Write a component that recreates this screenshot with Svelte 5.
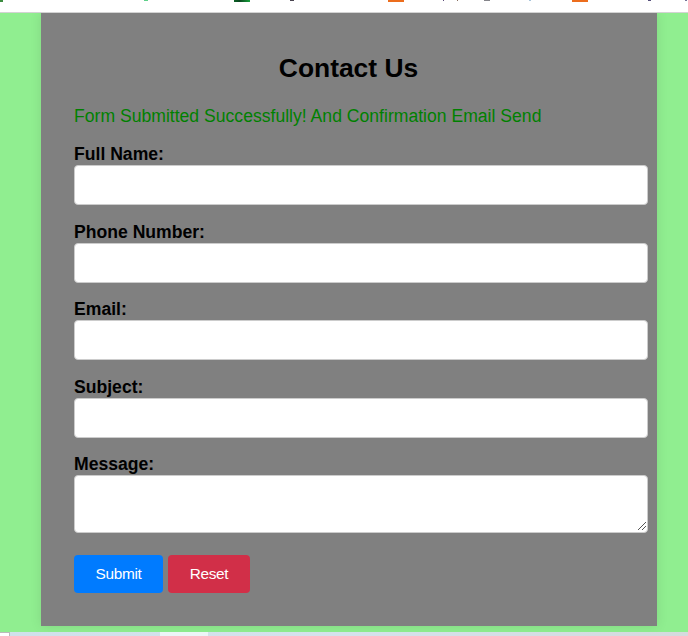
<script>
  const fields = ['Full Name', 'Phone Number', 'Email', 'Subject'];
  const marks = [
    { x: 0, w: 3, h: 2, c: '#3c8c40' },
    { x: 144, w: 4, h: 1, c: '#5fd08a' },
    { x: 234, w: 16, h: 2, c: 'linear-gradient(90deg, #0b6325, #0a4520 35%, #17a43c)' },
    { x: 290, w: 4, h: 1, c: '#4a4550' },
    { x: 388, w: 16, h: 2, c: '#ec6d1d' },
    { x: 443, w: 1, h: 1, c: '#5b4b79' },
    { x: 457, w: 1, h: 1, c: '#8a7060' },
    { x: 484, w: 6, h: 1, c: '#85858b' },
    { x: 529, w: 2, h: 1, c: '#a8c5dc' },
    { x: 572, w: 16, h: 2, c: '#ec6d1d' },
    { x: 648, w: 3, h: 1, c: '#56507c' },
    { x: 685, w: 2, h: 1, c: '#77749a' }
  ];
</script>

<div class="screen">
  <header>
    {#each marks as m}
      <i style="left:{m.x}px;width:{m.w}px;height:{m.h}px;background:{m.c}"></i>
    {/each}
  </header>
  <main>
    <section class="card">
      <h2>Contact Us</h2>
      <p>Form Submitted Successfully! And Confirmation Email Send</p>
      <form>
        {#each fields as field, i}
          <div class="field">
            <label for="field-{i}">{field}:</label>
            <input id="field-{i}" type="text" />
          </div>
        {/each}
        <div class="field">
          <label for="message">Message:</label>
          <div class="area">
            <textarea id="message"></textarea>
            <svg width="9" height="9" viewBox="0 0 9 9" shape-rendering="crispEdges">
              <path d="M0.5 8.5L8.5 0.5M4.5 8.5L8.5 4.5" stroke="#555" />
            </svg>
          </div>
        </div>
        <div class="actions">
          <button type="button" class="submit">Submit</button>
          <button type="button" class="reset">Reset</button>
        </div>
      </form>
    </section>
  </main>
  <footer><span class="corner"></span><span class="tab"></span></footer>
</div>

<style>
  .screen {
    width: 688px;
    height: 636px;
    display: flex;
    flex-direction: column;
    overflow: hidden;
    background: lightgreen;
    font-family: "Liberation Sans", Arial, sans-serif;
    color: #000;
  }
  header {
    flex: 0 0 13px;
    box-sizing: border-box;
    position: relative;
    z-index: 1;
    background: #fff;
    border-bottom: 1px solid #d3d3d3;
  }
  header i { position: absolute; top: 0; }
  main { flex: 0 0 619px; overflow: hidden; }
  .card {
    box-sizing: border-box;
    width: 616px;
    height: 613px;
    margin-left: 41px;
    padding: 39px 9px 0 33px;
    background: gray;
    box-shadow: 0 0 11px rgba(0, 0, 0, 0.1);
  }
  h2 {
    margin: 0 25px 0 0;
    font-size: 26.4px;
    line-height: 32px;
    text-align: center;
    letter-spacing: 0;
  }
  p {
    margin: 22px 0 18px;
    font-size: 17.6px;
    line-height: 20px;
    color: green;
    white-space: nowrap;
  }
  .field { margin-bottom: 16.55px; }
  label {
    display: block;
    height: 21px;
    padding-top: 1px;
    box-sizing: border-box;
    font-size: 17.6px;
    line-height: 19px;
    font-weight: bold;
  }
  input, textarea {
    display: block;
    box-sizing: border-box;
    width: 574px;
    height: 40px;
    margin: 0;
    padding: 8px;
    border: 1px solid #ccc;
    border-radius: 4px;
    background: #fff;
    outline: none;
  }
  .area { position: relative; }
  textarea { height: 58px; resize: none; }
  .area svg { position: absolute; right: 2px; bottom: 2px; }
  .actions { display: flex; gap: 5px; padding-top: 5px; }
  button {
    height: 38px;
    padding: 0;
    border: 0;
    border-radius: 4px;
    color: #fff;
    font: 15.4px "Liberation Sans", Arial, sans-serif;
    letter-spacing: -0.3px;
  }
  .submit { width: 89px; background: #007bff; }
  .reset { width: 82px; background: #d12f48; }
  footer {
    flex: 0 0 4px;
    display: flex;
    background: linear-gradient(90deg, #cfe1ea, #d5e2ec 50%, #d5dadd);
  }
  .corner {
    width: 10px;
    box-sizing: border-box;
    background: #fff;
    border-top: 1px solid #bbb;
    border-right: 1px solid #bbb;
  }
  .tab { width: 48px; margin-left: 150px; background: #edf5f7; }
</style>
